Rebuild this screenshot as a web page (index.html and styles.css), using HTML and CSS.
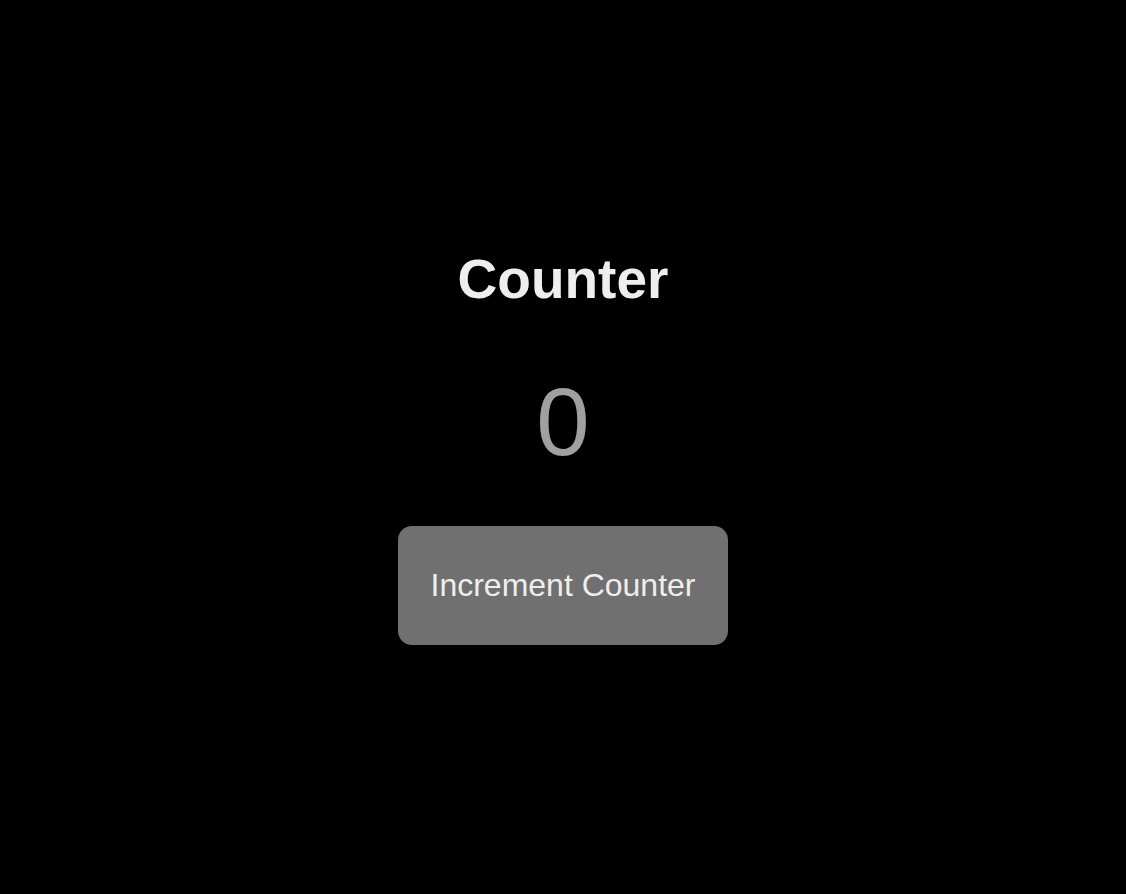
FILE: index.html
```html
<!DOCTYPE html>
<html lang="en">
<head>
    <meta charset="UTF-8">
    <meta name="viewport" content="width=device-width, initial-scale=1.0">
    <title>Counter</title>
    <link rel="stylesheet" href="styles.css">
</head>
<body>

    <!-- Contador -->
    <main class="counter">
        <h1 class="counter-title">Counter</h1>
        <p class="counter-value" id="counterValue">0</p>
        <button class="counter-btn" id="incrementBtn">Increment Counter</button>
    </main>

    <script>
        var valor = 0;
        document.getElementById('incrementBtn').addEventListener('click', function() {
            valor++;
            document.getElementById('counterValue').innerHTML = valor;
        });
    </script>

</body>
</html>
```

FILE: styles.css
```css
body {
    margin: 0;
    background-color: #000;
    font-family: "Liberation Sans", Arial, sans-serif;
}

.counter {
    min-height: 100vh;
    box-sizing: border-box;
    padding-bottom: 3px;
    display: flex;
    flex-direction: column;
    align-items: center;
    justify-content: center;
}

.counter-title {
    margin: 0 0 56px;
    font-size: 55px;
    font-weight: bold;
    color: #eeeeee;
}

.counter-value {
    margin: 0 0 49px;
    font-size: 96px;
    color: #a0a0a0;
}

.counter-btn {
    background-color: #707070;
    color: #eeeeee;
    font-family: inherit;
    font-size: 32px;
    padding: 41px 32px;
    border: none;
    border-radius: 14px;
    cursor: pointer;
}

.counter-btn:hover {
    background-color: #7a7a7a;
}
```
